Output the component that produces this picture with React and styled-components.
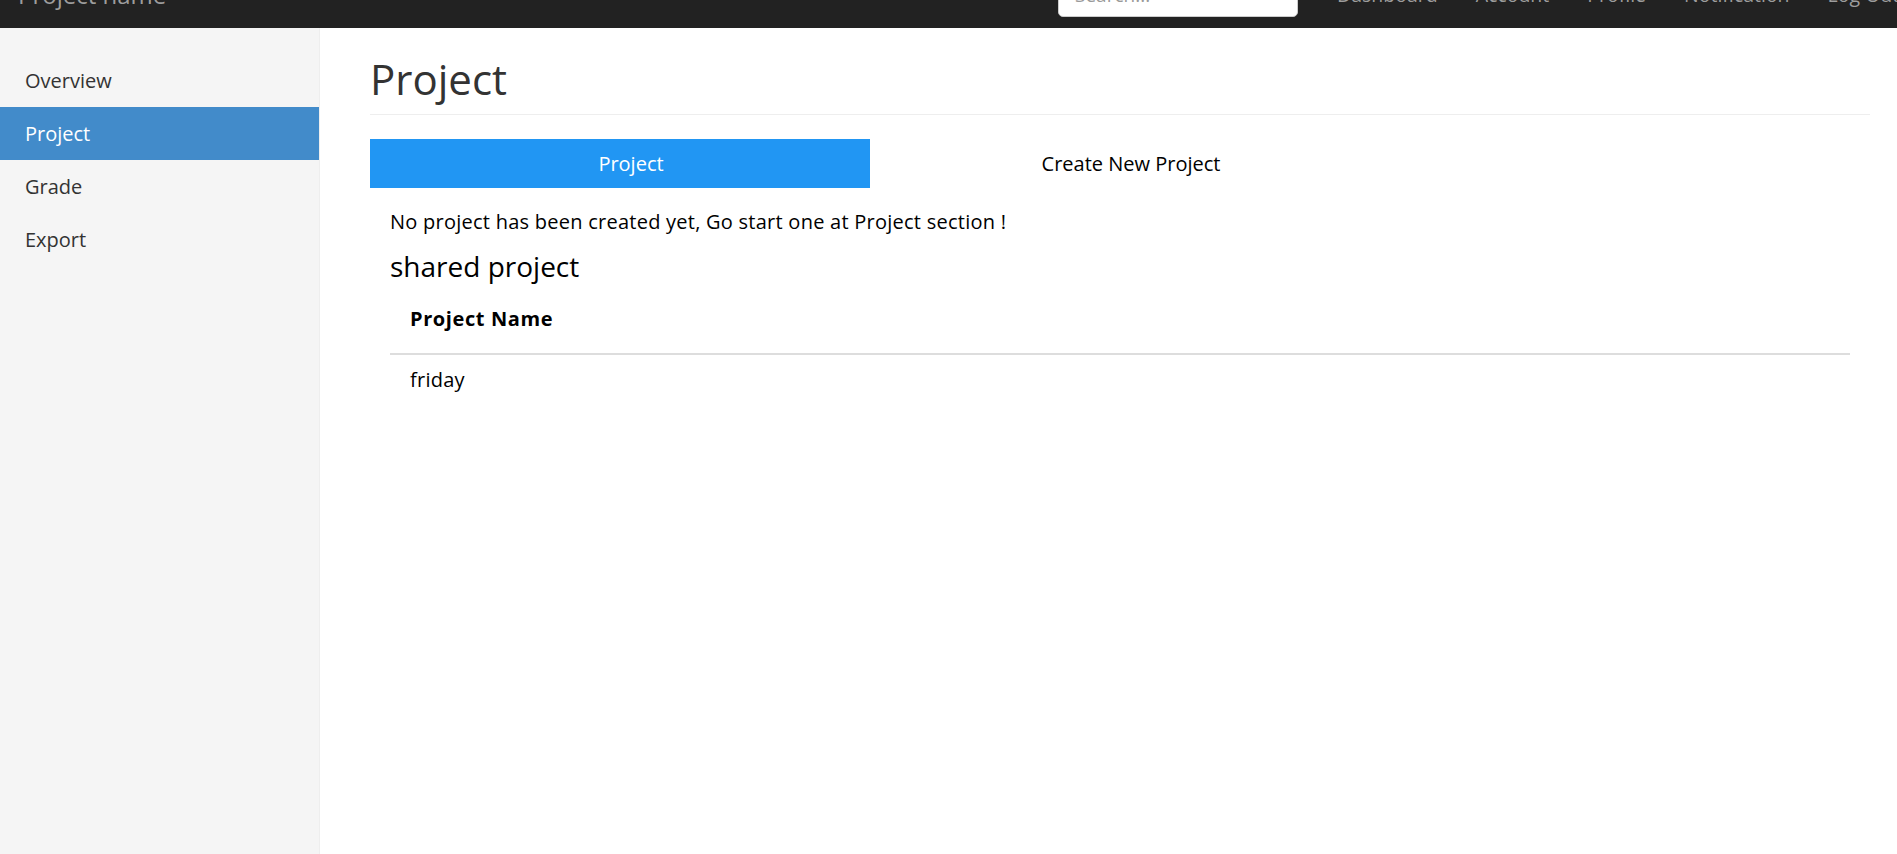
import React from 'react';
import styled, { createGlobalStyle } from 'styled-components';

const GlobalStyle = createGlobalStyle`
  html, body {
    margin: 0;
    padding: 0;
    background: #fff;
    overflow: hidden;
  }
  body {
    font-family: "Open Sans", "Noto Sans", sans-serif;
    color: #000;
  }
  * {
    box-sizing: border-box;
  }
`;

const Page = styled.div`
  display: flex;
  flex-direction: column;
  height: 854px;
  width: 1897px;
`;

// navbar is scrolled up, only its lower part shows
const NavBar = styled.header`
  height: 28px;
  flex-shrink: 0;
  background: #222;
  overflow: hidden;
  display: flex;
  align-items: flex-end;
`;

const NavInner = styled.div`
  height: 65px;
  flex-shrink: 0;
  width: 100%;
  display: grid;
  grid-template-columns: 1058px 1fr;
  white-space: nowrap;
`;

const Brand = styled.a`
  padding: 19px 0 0 18px;
  font-size: 24px;
  line-height: 26px;
  color: #9d9d9d;
  text-decoration: none;
`;

const NavRight = styled.div`
  display: flex;
  align-items: flex-start;
`;

const SearchInput = styled.input`
  margin-top: 10px;
  width: 240px;
  height: 44px;
  padding: 0 16px;
  border: 1px solid #ccc;
  border-radius: 5px;
  background: #fff;
  font-family: inherit;
  font-size: 19px;
  outline: none;
  &::placeholder {
    color: #999;
  }
`;

const NavLinks = styled.ul`
  display: flex;
  list-style: none;
  margin: 0 0 0 20px;
  padding: 0;
`;

const NavLink = styled.li`
  padding: 19px 19px 0;
  font-size: 19.5px;
  line-height: 26px;
  color: #9d9d9d;
`;

const Body = styled.div`
  display: flex;
  flex: 1;
  min-height: 0;
`;

const Sidebar = styled.nav`
  width: 320px;
  flex-shrink: 0;
  background: #f5f5f5;
  border-right: 1px solid #eee;
  padding-top: 26px;
`;

const SideItem = styled.div`
  height: 53px;
  line-height: 53px;
  padding-left: 25px;
  font-size: 20px;
  color: ${(p) => (p.active ? '#fff' : '#333')};
  background: ${(p) => (p.active ? '#428bca' : 'transparent')};
`;

const Main = styled.main`
  flex: 1;
  padding: 0 27px 0 50px;
`;

const PageHeader = styled.h1`
  margin: 27px 0 0;
  padding-bottom: 11px;
  border-bottom: 1px solid #eee;
  font-size: 42px;
  line-height: 48px;
  font-weight: 400;
  color: #333;
`;

const Tabs = styled.div`
  display: flex;
  margin-top: 24px;
`;

const Tab = styled.div`
  width: 500px;
  height: 49px;
  line-height: 49px;
  padding-left: 22px;
  text-align: center;
  font-size: 20px;
  color: ${(p) => (p.active ? '#fff' : '#000')};
  background: ${(p) => (p.active ? '#2196f3' : '#fff')};
`;

const TabBody = styled.section`
  padding: 0 20px;
  font-size: 20px;
  letter-spacing: 0.25px;
`;

const Notice = styled.p`
  margin: 20px 0 0;
  line-height: 27px;
`;

const SubTitle = styled.h3`
  margin: 14px 0 0;
  font-size: 28px;
  line-height: 34px;
  font-weight: 400;
  letter-spacing: 0;
`;

const Table = styled.table`
  width: 100%;
  margin-top: 8px;
  border-collapse: collapse;
  line-height: 27px;
`;

const Th = styled.th`
  text-align: left;
  padding: 14px 20px 21px;
  border-bottom: 2px solid #ddd;
  font-weight: 700;
  letter-spacing: 0.6px;
`;

const Td = styled.td`
  padding: 11px 20px;
`;

const sideItems = ['Overview', 'Project', 'Grade', 'Export'];
const navItems = ['Dashboard', 'Account', 'Profile', 'Notification', 'Log Out'];

const App = () => {
  return (
    <>
      <GlobalStyle />
      <Page>
        <NavBar>
          <NavInner>
            <Brand href="#">Project name</Brand>
            <NavRight>
              <SearchInput placeholder="Search..." />
              <NavLinks>
                {navItems.map((item) => (
                  <NavLink key={item}>{item}</NavLink>
                ))}
              </NavLinks>
            </NavRight>
          </NavInner>
        </NavBar>
        <Body>
          <Sidebar>
            {sideItems.map((item) => (
              <SideItem key={item} active={item === 'Project'}>
                {item}
              </SideItem>
            ))}
          </Sidebar>
          <Main>
            <PageHeader>Project</PageHeader>
            <Tabs>
              <Tab active>Project</Tab>
              <Tab>Create New Project</Tab>
            </Tabs>
            <TabBody>
              <Notice>No project has been created yet, Go start one at Project section !</Notice>
              <SubTitle>shared project</SubTitle>
              <Table>
                <thead>
                  <tr>
                    <Th>Project Name</Th>
                  </tr>
                </thead>
                <tbody>
                  <tr>
                    <Td>friday</Td>
                  </tr>
                </tbody>
              </Table>
            </TabBody>
          </Main>
        </Body>
      </Page>
    </>
  );
};

export default App;
